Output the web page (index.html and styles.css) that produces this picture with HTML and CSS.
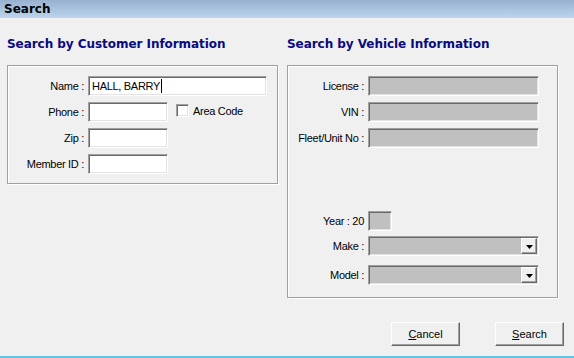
FILE: index.html
```html
<!DOCTYPE html>
<html>
<head>
<meta charset="utf-8">
<link rel="stylesheet" href="styles.css">
</head>
<body>
<div class="titlebar">Search</div>
<div class="main">
  <div class="col">
    <div class="heading">Search by Customer Information</div>
    <div class="group">
      <div class="row"><span class="lbl">Name :</span><div class="field w-name">HALL, BARRY<span class="caret"></span></div></div>
      <div class="row"><span class="lbl">Phone :</span><div class="field w-short"></div><span class="check"></span><span class="check-lbl">Area Code</span></div>
      <div class="row"><span class="lbl">Zip :</span><div class="field w-short"></div></div>
      <div class="row"><span class="lbl">Member ID :</span><div class="field w-short"></div></div>
    </div>
  </div>
  <div class="col">
    <div class="heading">Search by Vehicle Information</div>
    <div class="group group-tall">
      <div class="row"><span class="lbl">License :</span><div class="field disabled w-long"></div></div>
      <div class="row"><span class="lbl">VIN :</span><div class="field disabled w-long"></div></div>
      <div class="row"><span class="lbl">Fleet/Unit No :</span><div class="field disabled w-long"></div></div>
      <div class="row row-year"><span class="lbl">Year : 20</span><div class="field disabled w-year"></div></div>
      <div class="row row-make"><span class="lbl">Make :</span><div class="field disabled w-long combo"><span class="drop"><svg width="7" height="4" viewBox="0 0 7 4"><polygon points="0,0 7,0 3.5,4" fill="#000"/></svg></span></div></div>
      <div class="row row-model"><span class="lbl">Model :</span><div class="field disabled w-long combo"><span class="drop"><svg width="7" height="4" viewBox="0 0 7 4"><polygon points="0,0 7,0 3.5,4" fill="#000"/></svg></span></div></div>
    </div>
  </div>
</div>
<div class="footer">
  <button class="btn"><u>C</u>ancel</button>
  <button class="btn"><u>S</u>earch</button>
</div>
<div class="bottomline"></div>
</body>
</html>
```
FILE: styles.css
```css
html, body {
  margin: 0;
  padding: 0;
}
body {
  width: 574px;
  height: 358px;
  overflow: hidden;
  background: #f0f0f0;
  display: flex;
  flex-direction: column;
  font-family: "Liberation Sans", Arial, sans-serif;
  font-size: 11px;
  letter-spacing: -0.3px;
  color: #000;
}
.titlebar {
  height: 18px;
  line-height: 18px;
  padding-left: 4px;
  background: linear-gradient(to bottom, #97b1d0, #bcd4ec);
  font-family: "DejaVu Sans", Verdana, sans-serif;
  font-weight: bold;
  font-size: 12px;
  letter-spacing: 0;
  color: #000;
}
.main {
  display: grid;
  grid-template-columns: 271px 271px;
  column-gap: 9px;
  padding: 19px 0 0 7px;
  align-items: start;
}
.heading {
  font-family: "DejaVu Sans", Verdana, sans-serif;
  font-weight: bold;
  font-size: 12px;
  line-height: 14px;
  letter-spacing: -0.05px;
  color: #0a0a80;
  margin-bottom: 14px;
}
.group {
  border: 1px solid #a0a0a0;
  box-shadow: inset 1px 1px 0 #fff, 1px 1px 0 #fff;
  padding: 10px 0 9px 0;
}
.group-tall {
  padding-bottom: 12px;
}
.row {
  display: flex;
  align-items: center;
  height: 20px;
}
.row + .row {
  margin-top: 6px;
}
.row.row-year { margin-top: 63px; }
.row.row-make { margin-top: 5px; }
.row.row-model { margin-top: 9px; }
.lbl {
  width: 76px;
  margin-right: 4px;
  text-align: right;
  white-space: nowrap;
}
.field {
  box-sizing: border-box;
  height: 20px;
  background: #fff;
  border: 1px solid;
  border-color: #a0a0a0 #fff #fff #a0a0a0;
  box-shadow: inset 1px 1px 0 #696969, inset -1px -1px 0 #e3e3e3;
  padding: 0 0 0 3px;
  line-height: 18px;
  display: flex;
  align-items: center;
  position: relative;
}
.field.disabled {
  background: #c0c0c0;
}
.w-name { width: 179px; }
.w-short { width: 80px; }
.w-long { width: 171px; }
.w-year { width: 24px; }
.caret {
  display: inline-block;
  width: 1px;
  height: 14px;
  background: #000;
  margin-left: 1px;
}
.check {
  box-sizing: border-box;
  width: 13px;
  height: 13px;
  margin-left: 8px;
  margin-top: -3px;
  background: #fff;
  border: 1px solid;
  border-color: #a0a0a0 #fff #fff #a0a0a0;
  box-shadow: inset 1px 1px 0 #696969, inset -1px -1px 0 #e3e3e3;
}
.check-lbl {
  margin-left: 4px;
  margin-top: -3px;
}
.combo {
  justify-content: flex-end;
  padding: 0 1px 0 0;
}
.drop {
  box-sizing: border-box;
  width: 16px;
  height: 16px;
  background: #f0f0f0;
  border: 1px solid;
  border-color: #fff #696969 #696969 #fff;
  box-shadow: inset -1px -1px 0 #a0a0a0;
  display: flex;
  align-items: center;
  justify-content: center;
}
.drop svg {
  display: block;
  margin-top: 1px;
}
.footer {
  display: flex;
  justify-content: flex-end;
  gap: 35px;
  padding-right: 10px;
  margin-top: 24px;
}
.btn {
  box-sizing: border-box;
  width: 69px;
  height: 24px;
  padding: 0;
  background: #f0f0f0;
  border: 1px solid;
  border-color: #fff #696969 #696969 #fff;
  box-shadow: inset -1px -1px 0 #a0a0a0;
  font-family: "Liberation Sans", Arial, sans-serif;
  font-size: 11px;
  letter-spacing: 0;
  color: #000;
}
.bottomline {
  margin-top: auto;
  height: 2px;
  background: #62c5e6;
}
```
